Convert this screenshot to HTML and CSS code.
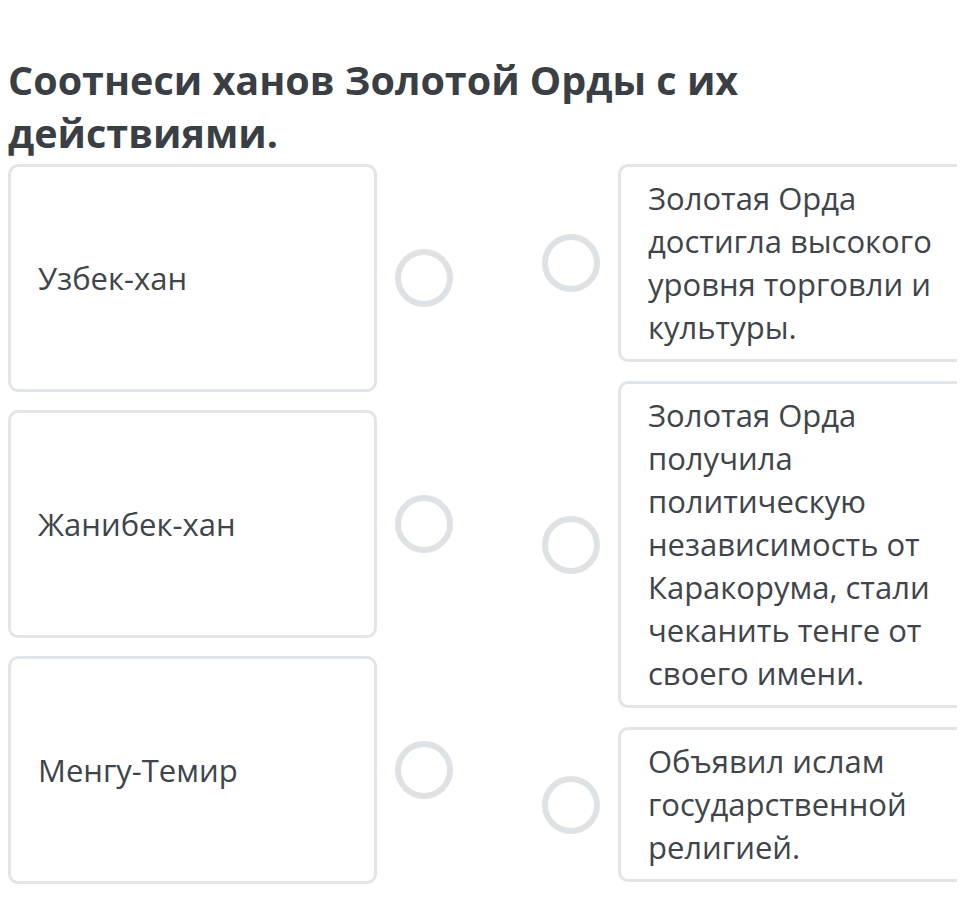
FILE: index.html
```html
<!DOCTYPE html>
<html lang="ru">
<head>
<meta charset="utf-8">
<title>Соотнеси ханов</title>
<link rel="stylesheet" href="styles.css">
</head>
<body>
<div class="page">
  <h1 class="title">Соотнеси ханов Золотой Орды с их действиями.</h1>
  <div class="match">
    <div class="col col-left">
      <div class="row">
        <div class="card card-left">Узбек-хан</div>
        <span class="dot"></span>
      </div>
      <div class="row">
        <div class="card card-left">Жанибек-хан</div>
        <span class="dot"></span>
      </div>
      <div class="row">
        <div class="card card-left">Менгу-Темир</div>
        <span class="dot"></span>
      </div>
    </div>
    <div class="col col-right">
      <div class="row">
        <span class="dot"></span>
        <div class="card card-right">Золотая Орда достигла высокого уровня торговли и культуры.</div>
      </div>
      <div class="row">
        <span class="dot"></span>
        <div class="card card-right">Золотая Орда получила политическую независимость от Каракорума, стали чеканить тенге от своего имени.</div>
      </div>
      <div class="row">
        <span class="dot"></span>
        <div class="card card-right">Объявил ислам государственной религией.</div>
      </div>
    </div>
  </div>
</div>
</body>
</html>
```
FILE: styles.css
```css
html, body {
  overflow: hidden;
}
body {
  margin: 8px;
  background: #ffffff;
  font-family: "Open Sans", "Noto Sans", sans-serif;
  color: #40444b;
}
.page {
  width: 979px;
}
.title {
  margin: 46px 0 4px 0;
  font-size: 39.5px;
  line-height: 53px;
  font-weight: 700;
  color: #3a3e45;
}
.match {
  display: flex;
  align-items: flex-start;
  gap: 89px;
}
.col {
  display: flex;
  flex-direction: column;
}
.col-left {
  gap: 18px;
}
.col-right {
  gap: 19px;
}
.row {
  display: flex;
  align-items: center;
  gap: 18px;
}
.card {
  box-sizing: border-box;
  width: 369px;
  border: 3px solid #e2e5e8;
  border-radius: 10px;
  background: #fff;
  font-size: 31px;
  line-height: 43px;
  color: #40444b;
}
.card-left {
  height: 228px;
  display: flex;
  align-items: center;
  padding: 0 20px 0 27px;
}
.card-right {
  padding: 10px 20px 10px 27px;
}
.dot {
  flex: none;
  box-sizing: border-box;
  width: 58px;
  height: 58px;
  border: 6px solid #dfe2e5;
  border-radius: 50%;
}
```
